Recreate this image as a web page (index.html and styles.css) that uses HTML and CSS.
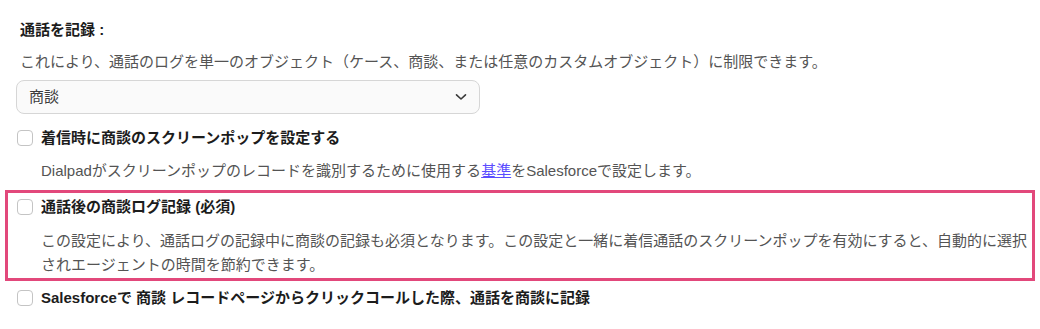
FILE: index.html
```html
<!DOCTYPE html>
<html lang="ja">
<head>
<meta charset="utf-8">
<link rel="stylesheet" href="styles.css">
</head>
<body>
<div class="page">
  <h3 class="title">通話を記録 :</h3>
  <p class="desc lead">これにより、通話のログを単一のオブジェクト（ケース、商談、または任意のカスタムオブジェクト）に制限できます。</p>
  <div class="select">
    <span class="select-value">商談</span>
    <svg class="chevron" width="12" height="8" viewBox="0 0 12 8"><path d="M1.5 1.8 L6 6 L10.5 1.8" fill="none" stroke="#3a3a3a" stroke-width="1.6" stroke-linecap="round" stroke-linejoin="round"/></svg>
  </div>

  <div class="option first">
    <label class="row"><span class="checkbox"></span><span class="label">着信時に商談のスクリーンポップを設定する</span></label>
    <p class="desc sub">Dialpadがスクリーンポップのレコードを識別するために使用する<a class="link" href="#">基準</a>をSalesforceで設定します。</p>
  </div>

  <div class="option highlight">
    <label class="row"><span class="checkbox"></span><span class="label">通話後の商談ログ記録 (必須)</span></label>
    <p class="desc sub">この設定により、通話ログの記録中に商談の記録も必須となります。この設定と一緒に着信通話のスクリーンポップを有効にすると、自動的に選択されエージェントの時間を節約できます。</p>
  </div>

  <div class="option last">
    <label class="row"><span class="checkbox"></span><span class="label">Salesforceで 商談 レコードページからクリックコールした際、通話を商談に記録</span></label>
  </div>
</div>
</body>
</html>
```

FILE: styles.css
```css
html, body {
  margin: 0;
  padding: 0;
  background: #ffffff;
}
body {
  font-family: "Liberation Sans", "Noto Sans CJK JP", sans-serif;
  font-size: 15px;
  line-height: 24px;
  color: #1f1f1f;
}
.page {
  width: 1040px;
  padding-top: 18px;
}
.title {
  margin: 0 0 8px 20px;
  font-size: 15px;
  line-height: 24px;
  font-weight: 700;
  color: #1c1c1c;
}
.desc {
  margin: 0;
  color: #545454;
  font-size: 15px;
  line-height: 24px;
}
.lead {
  margin-left: 20px;
}
.select {
  box-sizing: border-box;
  margin: 6px 0 0 16px;
  width: 464px;
  height: 34px;
  border: 1px solid #d6d6d6;
  border-radius: 8px;
  background: #fafafa;
  display: flex;
  align-items: center;
  justify-content: space-between;
  padding: 0 12px 0 12px;
}
.select-value {
  color: #3c3c3c;
}
.chevron {
  display: block;
}
.option {
  padding-left: 17px;
}
.option.first {
  margin-top: 12px;
}
.row {
  display: flex;
  align-items: center;
  gap: 8px;
  height: 24px;
}
.checkbox {
  box-sizing: border-box;
  width: 16px;
  height: 16px;
  border: 1px solid #c4c4c4;
  border-radius: 4px;
  background: #fff;
  flex: none;
}
.label {
  font-weight: 700;
  color: #1c1c1c;
}
.sub {
  margin-top: 9px;
  padding-left: 24px;
}
.link {
  color: #5b4dff;
  text-decoration: underline;
}
.highlight {
  margin: 7px 5px 0 5px;
  border: 3px solid #e2487b;
  padding: 2px 0 1px 9px;
}
.highlight .sub {
  margin-top: 10px;
}
.option.last {
  margin-top: 5px;
}
```
